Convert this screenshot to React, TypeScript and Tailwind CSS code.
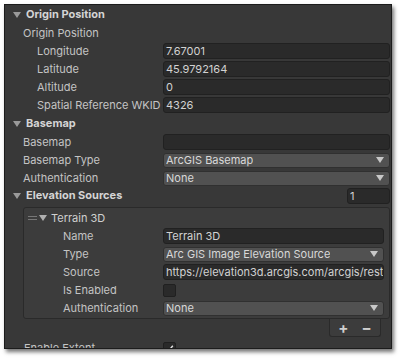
import React from 'react';

const Caret = ({ className = '' }: { className?: string }) => (
  <svg className={className} width="8" height="6" viewBox="0 0 8 6">
    <path d="M0 0h8L4 6z" fill="currentColor" />
  </svg>
);

function Header({ title }: { title: string }) {
  return (
    <div className="flex h-[19px] items-center pl-[8px] text-[#d4d4d4] font-bold">
      <Caret className="text-[#9a9a9a] mr-[5px]" />
      <span>{title}</span>
    </div>
  );
}

function Row({ label, indent, nested, children }: { label: string; indent: string; nested?: boolean; children?: React.ReactNode }) {
  return (
    <div className="flex h-[18px] items-center">
      <div className={`shrink-0 truncate text-[#c4c4c4] ${nested ? 'w-[139px]' : 'w-[158px]'} ${indent}`}>{label}</div>
      <div className="flex-1 min-w-0">{children}</div>
    </div>
  );
}

function Field({ value }: { value?: string }) {
  return (
    <div className="h-[16px] rounded-[3px] border border-[#212121] bg-[#2a2a2a] px-[2px] leading-[14px] text-[#d2d2d2] whitespace-nowrap overflow-hidden">
      {value}
    </div>
  );
}

function Dropdown({ value }: { value: string }) {
  return (
    <div className="flex h-[15px] items-center justify-between rounded-[3px] border border-[#303030] bg-[#515151] pl-[2px] pr-[5px] text-[#d8d8d8]">
      <span className="whitespace-nowrap overflow-hidden">{value}</span>
      <Caret className="text-[#c8c8c8] shrink-0" />
    </div>
  );
}

function Checkbox({ checked }: { checked?: boolean }) {
  return (
    <div className="flex h-[13px] w-[13px] items-center justify-center rounded-[2px] border border-[#202020] bg-[#2a2a2a]">
      {checked && (
        <svg width="9" height="9" viewBox="0 0 9 9">
          <path d="M1.5 4.8L3.6 7 7.8 1.8" fill="none" stroke="#e0e0e0" strokeWidth="1.5" />
        </svg>
      )}
    </div>
  );
}

export default function App() {
  return (
    <div className="h-[358px] w-[400px] bg-white pl-[4px] pt-[4px]" style={{ fontFamily: 'Inter, "Noto Sans", sans-serif' }}>
      <div className="h-[345px] w-[388px] overflow-hidden border border-[#1c1c1c] bg-[#383838] text-[11px] shadow-[2px_3px_4px_rgba(0,0,0,0.55)]">
        <Header title="Origin Position" />
        <div className="pr-[1px]">
          <Row label="Origin Position" indent="pl-[18px]" />
          <Row label="Longitude" indent="pl-[32px]"><Field value="7.67001" /></Row>
          <Row label="Latitude" indent="pl-[32px]"><Field value="45.9792164" /></Row>
          <Row label="Altitude" indent="pl-[32px]"><Field value="0" /></Row>
          <Row label="Spatial Reference WKID" indent="pl-[32px]"><Field value="4326" /></Row>
        </div>

        <Header title="Basemap" />
        <div className="pr-[1px]">
          <Row label="Basemap" indent="pl-[18px]"><Field /></Row>
          <Row label="Basemap Type" indent="pl-[18px]"><Dropdown value="ArcGIS Basemap" /></Row>
          <Row label="Authentication" indent="pl-[18px]"><Dropdown value="None" /></Row>
        </div>

        <div className="flex h-[17px] items-center justify-between pl-[8px] pr-[1px]">
          <div className="flex items-center font-bold text-[#d4d4d4]">
            <Caret className="text-[#9a9a9a] mr-[5px]" />
            <span>Elevation Sources</span>
          </div>
          <div className="w-[43px]"><Field value="1" /></div>
        </div>

        <div className="ml-[18px] mr-[1px] mt-[3px]">
          <div className="rounded-[3px] border border-[#2a2a2a] bg-[#3c3c3c] pb-[1px] pt-[1px] pr-[5px]">
            <div className="flex h-[18px] items-center pl-[4px] text-[#d0d0d0]">
              <div className="mr-[2px] flex w-[9px] flex-col gap-[2px]">
                <div className="h-[1px] bg-[#777777]" />
                <div className="h-[1px] bg-[#777777]" />
              </div>
              <Caret className="text-[#b0b0b0] mr-[4px]" />
              <span>Terrain 3D</span>
            </div>
            <Row label="Name" indent="pl-[39px]" nested><Field value="Terrain 3D" /></Row>
            <Row label="Type" indent="pl-[39px]" nested><Dropdown value="Arc GIS Image Elevation Source" /></Row>
            <Row label="Source" indent="pl-[39px]" nested><Field value="https://elevation3d.arcgis.com/arcgis/rest" /></Row>
            <Row label="Is Enabled" indent="pl-[39px]" nested><Checkbox /></Row>
            <Row label="Authentication" indent="pl-[39px]" nested><Dropdown value="None" /></Row>
          </div>
          <div className="flex justify-end pr-[9px]">
            <div className="flex h-[18px] w-[52px] items-center justify-center gap-[13px] rounded-b-[3px] border border-t-0 border-[#2a2a2a] bg-[#3c3c3c] text-[15px] font-bold leading-none text-[#cfcfcf]">
              <span>+</span>
              <span>−</span>
            </div>
          </div>
        </div>

        <div className="mt-[2px] flex h-[18px] items-center">
          <div className="w-[158px] shrink-0 pl-[19px] text-[#c4c4c4]">Enable Extent</div>
          <Checkbox checked />
        </div>
      </div>
    </div>
  );
}
